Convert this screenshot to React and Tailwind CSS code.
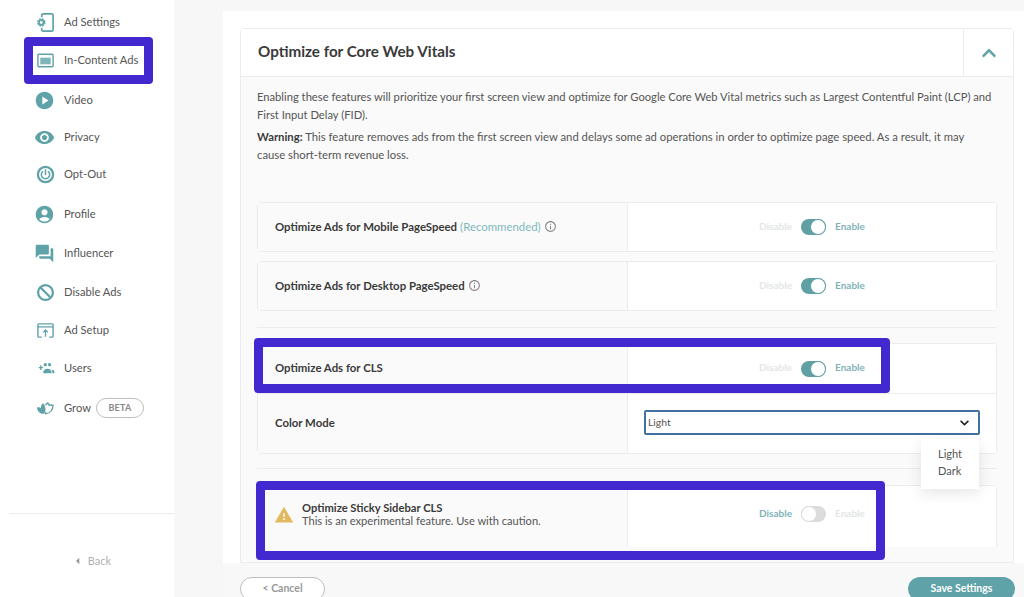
import React from 'react';
import { MdPlayCircle, MdVisibility, MdAccountCircle, MdQuestionAnswer, MdWarning, MdInfoOutline, MdArrowLeft } from 'react-icons/md';
import { FaChevronUp, FaChevronDown } from 'react-icons/fa';

const AdSettingsIcon = ({ className }) => (
  <svg viewBox="0 0 20 20" className={className} fill="none" stroke="currentColor" strokeWidth="1.8">
    <path d="M6 4.500V2.500A1.500 1.500 0 0 1 7.500 1h9A1.500 1.500 0 0 1 18 2.500v15a1.500 1.500 0 0 1-1.500 1.500h-9A1.500 1.500 0 0 1 6 17.500v-2" />
    <circle cx="5.500" cy="10" r="3.800" strokeWidth="1.400" strokeDasharray="2 1" />
    <circle cx="5.500" cy="10" r="2.400" strokeWidth="1.800" />
  </svg>
);

const InContentIcon = ({ className }) => (
  <svg viewBox="0 0 20 20" className={className} fill="none">
    <rect x="2" y="3.500" width="16" height="13" rx="1" stroke="currentColor" strokeWidth="1.500" />
    <rect x="4.500" y="7" width="11" height="7" fill="currentColor" opacity="0.8" />
  </svg>
);

const PowerIcon = ({ className }) => (
  <svg viewBox="0 0 20 20" className={className} fill="none" stroke="currentColor">
    <circle cx="10" cy="10" r="8" strokeWidth="2.400" />
    <path d="M7 6.800a4.400 4.400 0 1 0 6 0M10 5v5" strokeWidth="1.600" strokeLinecap="round" />
  </svg>
);

const BlockIcon = ({ className }) => (
  <svg viewBox="0 0 20 20" className={className} fill="none" stroke="currentColor" strokeWidth="2.400">
    <circle cx="10" cy="10" r="7.800" />
    <path d="M4.500 4.500l11 11" />
  </svg>
);

const AdSetupIcon = ({ className }) => (
  <svg viewBox="0 0 20 20" className={className} fill="none" stroke="currentColor" strokeWidth="1.500">
    <path d="M6 17H3a1 1 0 0 1-1-1V4a1 1 0 0 1 1-1h14a1 1 0 0 1 1 1v12a1 1 0 0 1-1 1h-3" />
    <path d="M2 6.200h16" strokeWidth="1.300" />
    <path d="M10 16.500V9.500M7.500 12 10 9.500l2.500 2.500" strokeWidth="1.400" />
  </svg>
);

const UsersIcon = ({ className }) => (
  <svg viewBox="0 0 20 20" className={className} fill="currentColor">
    <path d="M3 8.500h1.300V6.700h1.400v1.800H7.500v1.300H5.700v1.800H4.300V9.800H3z" />
    <circle cx="9.800" cy="6" r="1.700" />
    <circle cx="14.300" cy="6" r="1.700" />
    <path d="M7.500 15c0-3 1.500-4.800 4.500-4.800s4.500 1.800 4.500 4.800z" />
    <path d="M17.300 15h2v-1.500c0-1.300-.7-2.200-2.800-2.500.5 1 .8 2.400.8 4z" />
  </svg>
);

const GrowIcon = ({ className }) => (
  <svg viewBox="0 0 20 20" className={className} fill="none">
    <path d="M1 9c2-.6 3-.3 4 .4C5.300 7 6 5.600 7.500 4.500c1 1 1.700 2.300 2 3.700 1 2.500.5 5.500-1.500 7.300-3.500.5-6.500-2-7-6.500z" fill="currentColor" />
    <path d="M10 6.500c.6-1 1.400-1.800 2.500-2.300.7.700 1.200 1.500 1.500 2.500 1.200-.5 2.500-.6 4-.2-.2 4.500-3 8.500-8 9-1.500-2.200-1.500-4.500-1-6.500" stroke="currentColor" strokeWidth="1.500" />
  </svg>
);

const NAV = [
  { label: 'Ad Settings', icon: AdSettingsIcon, h: 'h-[38px]' },
  { label: 'In-Content Ads', icon: InContentIcon, h: 'h-[39px]' },
  { label: 'Video', icon: MdPlayCircle, h: 'h-[40px]', big: true },
  { label: 'Privacy', icon: MdVisibility, h: 'h-[34px]', big: true },
  { label: 'Opt-Out', icon: PowerIcon, h: 'h-[41px]' },
  { label: 'Profile', icon: MdAccountCircle, h: 'h-[39px]', big: true },
  { label: 'Influencer', icon: MdQuestionAnswer, h: 'h-[39px]', big: true },
  { label: 'Disable Ads', icon: BlockIcon, h: 'h-[39px]' },
  { label: 'Ad Setup', icon: AdSetupIcon, h: 'h-[37px]' },
  { label: 'Users', icon: UsersIcon, h: 'h-[38px]' },
  { label: 'Grow', icon: GrowIcon, h: 'h-[42px]', beta: true },
];

function Toggle({ on = true }) {
  return (
    <div className="flex h-full items-center justify-center gap-[9px] text-[10px] font-bold">
      <span className={on ? 'pb-[2px] text-[#e3e6e6]' : 'pb-[2px] text-[#7fb3b7]'}>Disable</span>
      {on ? (
        <div className="flex h-4 w-[25px] justify-end rounded-full bg-[#5fa0a4]">
          <div className="h-4 w-4 rounded-full border border-[#5fa0a4] bg-white" />
        </div>
      ) : (
        <div className="flex h-4 w-[25px] justify-start rounded-full bg-[#dcdcdc]">
          <div className="h-4 w-4 rounded-full border border-[#dcdcdc] bg-white" />
        </div>
      )}
      <span className={on ? 'pb-[2px] text-[#7fb3b7]' : 'pb-[2px] text-[#e3e6e6]'}>Enable</span>
    </div>
  );
}

function SettingRow({ label, children, on, border, h = 'h-[50px]', right }) {
  return (
    <div className={`flex ${h} ${border ? 'rounded border border-[#ececec]' : ''}`}>
      <div className="flex w-[369px] shrink-0 items-center bg-[#fafafa] pb-[1px] pl-[17px] text-[11.4px] font-bold text-[#3a3a3a]">
        {label}
        {children}
      </div>
      <div className="flex-1 border-l border-[#ececec] bg-white">
        {right || <Toggle on={on} />}
      </div>
    </div>
  );
}

export default function App() {
  return (
    <div className="relative flex h-[597px] w-[1024px] overflow-hidden bg-[#f7f7f7]" style={{ fontFamily: 'Lato, sans-serif' }}>
      {/* Sidebar */}
      <aside className="flex w-[174px] shrink-0 flex-col bg-white pl-[36px] pt-[3px]">
        {NAV.map((item) => {
          const Icon = item.icon;
          return (
            <div key={item.label} className={`flex ${item.h} items-center`}>
              <div className="flex w-[28px] shrink-0 justify-start text-[#5fa3a8]">
                <Icon className={item.big ? 'h-[21px] w-[21px] -ml-[2px]' : 'h-[19px] w-[19px]'} />
              </div>
              <span className="text-[11.2px] text-[#555]">{item.label}</span>
              {item.beta && (
                <span className="ml-[5px] flex h-[20px] w-[48px] items-center justify-center rounded-full border border-[#bdbdbd] text-[9px] font-bold tracking-wide text-[#888]">BETA</span>
              )}
            </div>
          );
        })}
        <div className="-ml-[27px] mt-[84px] border-t border-[#ececec]" />
        <div className="mt-[39px] flex items-center justify-center pr-[36px] pl-[7px] text-[11px] text-[#b0b0b0]">
          <MdArrowLeft className="h-4 w-4 text-[#999]" />
          <span className="ml-[2px]">Back</span>
        </div>
      </aside>

      {/* Main */}
      <main className="ml-[49px] flex flex-1 flex-col pt-[11px]">
        <div className="flex h-[552px] shrink-0 flex-col bg-white pl-[17px] pr-[10px] pt-[17px]">
          <section className="flex h-[535px] flex-col rounded-t border border-[#ececec] bg-[#fafafa]">
            <header className="flex h-[48px] shrink-0 border-b border-[#ececec] bg-white">
              <h1 className="flex flex-1 items-center pb-[2px] pl-[17px] text-[15.2px] font-bold text-[#3a3a3a]">Optimize for Core Web Vitals</h1>
              <div className="flex w-[50px] items-center justify-center border-l border-[#ececec] text-[#5fa3a8]">
                <FaChevronUp className="h-[16px] w-[16px]" />
              </div>
            </header>
            <div className="flex-1 px-[16px] pt-[11px]">
              <p className="text-[11.2px] leading-[18px] text-[#555]">
                Enabling these features will prioritize your first screen view and optimize for Google Core Web Vital metrics such as Largest Contentful Paint (LCP) and First Input Delay (FID).
              </p>
              <p className="mt-[4px] pr-[24px] text-[11.3px] leading-[18px] text-[#555]">
                <b className="text-[#3a3a3a]">Warning:</b> This feature removes ads from the first screen view and delays some ad operations in order to optimize page speed. As a result, it may cause short-term revenue loss.
              </p>

              <div className="mt-[38px] flex flex-col gap-[9px]">
                <SettingRow border on label="Optimize Ads for Mobile PageSpeed">
                  <span className="ml-[3px] font-normal text-[#7fb8bc]">(Recommended)</span>
                  <MdInfoOutline className="ml-[3px] h-[13px] w-[13px] text-[#888]" />
                </SettingRow>
                <SettingRow border on label="Optimize Ads for Desktop PageSpeed">
                  <MdInfoOutline className="ml-[3px] h-[13px] w-[13px] text-[#888]" />
                </SettingRow>
              </div>

              <div className="mt-[16px] border-t border-[#ececec]" />

              <div className="mt-[15px] rounded border border-[#ececec]">
                <SettingRow on h="h-[49px]" label="Optimize Ads for CLS" />
                <div className="border-t border-[#ececec]">
                  <SettingRow
                    label="Color Mode"
                    h="h-[59px]"
                    right={
                      <div className="flex h-full items-start px-[16px] pt-[16px]">
                        <div className="flex h-[25px] w-full items-center justify-between rounded-[2px] border-2 border-[#3f72a3] bg-white pl-[2px] pr-[8px] text-[10.4px] text-[#555]">
                          Light
                          <FaChevronDown className="h-[10px] w-[11px] text-[#222]" />
                        </div>
                      </div>
                    }
                  />
                </div>
              </div>

              <div className="mt-[14px] border-t border-[#ececec]" />

              <div className="mt-[16px] rounded-t border border-b-0 border-[#ececec]">
                <SettingRow
                  h="h-[61px]"
                  label={null}
                  right={<div className="h-[56px]"><Toggle on={false} /></div>}
                >
                  <div className="-ml-[1px] -mt-[3px] flex items-center gap-[8px]">
                    <MdWarning className="h-[20px] w-[20px] text-[#e3b95f]" />
                    <div>
                      <div className="text-[11.2px] leading-[13px] font-bold text-[#3a3a3a]">Optimize Sticky Sidebar CLS</div>
                      <div className="text-[11.1px] leading-[14px] font-normal text-[#555]">This is an experimental feature. Use with caution.</div>
                    </div>
                  </div>
                </SettingRow>
              </div>
            </div>
          </section>
        </div>

        {/* Footer */}
        <footer className="flex flex-1 items-start justify-between bg-[#f8f8f8] pl-[17px] pr-[9px] pt-[14px]">
          <button className="h-[24px] w-[85px] shrink-0 rounded-full border border-[#bdbdbd] bg-white text-[10.5px] font-bold text-[#999]">&lt; Cancel</button>
          <button className="h-[24px] w-[107px] shrink-0 rounded-full bg-[#5fa3a8] text-[10.5px] font-bold text-white">Save Settings</button>
        </footer>
      </main>

      {/* Dropdown menu */}
      <div className="absolute left-[921px] top-[439px] flex h-[50px] w-[58px] flex-col justify-center bg-white pb-[4px] pl-[17px] text-[11px] leading-[17px] text-[#555] shadow-[0_4px_14px_rgba(0,0,0,0.1)]">
        <span>Light</span>
        <span>Dark</span>
      </div>

      {/* Annotation boxes */}
      <div className="absolute left-[24px] top-[37px] h-[47px] w-[129px] rounded-[4px] border-[9px] border-[#4228cf]" />
      <div className="absolute left-[254px] top-[338px] h-[55px] w-[636px] rounded-[4px] border-[9px] border-[#4228cf]" />
      <div className="absolute left-[256px] top-[481px] h-[79px] w-[629px] rounded-[4px] border-[9px] border-[#4228cf]" />
    </div>
  );
}
